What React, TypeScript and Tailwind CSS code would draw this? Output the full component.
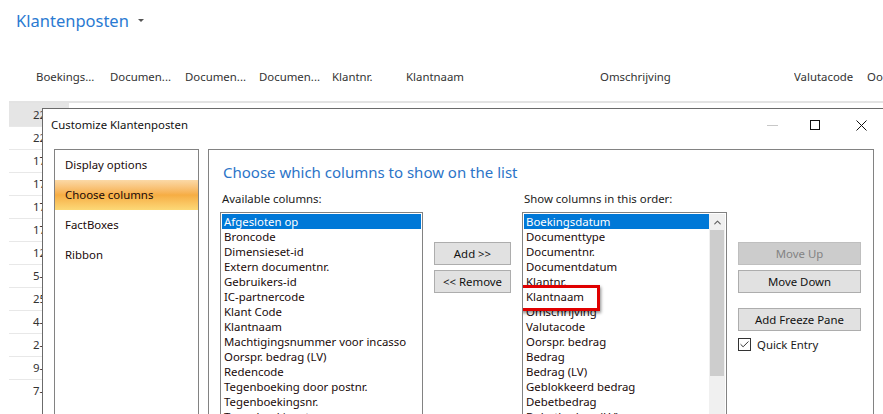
import { Check, ChevronUp } from 'lucide-react';

const font = { fontFamily: '"Noto Sans", "Open Sans", sans-serif' };

const headers: Array<{ label: string; width: string }> = [
  { label: 'Boekings...', width: 'w-[74px]' },
  { label: 'Documen...', width: 'w-[75px]' },
  { label: 'Documen...', width: 'w-[74px]' },
  { label: 'Documen...', width: 'w-[73px]' },
  { label: 'Klantnr.', width: 'w-[74px]' },
  { label: 'Klantnaam', width: 'w-[194px]' },
  { label: 'Omschrijving', width: 'w-[194px]' },
  { label: 'Valutacode', width: 'w-[73px]' },
  { label: 'Oorspr. bedrag', width: 'w-[80px]' }
];

const gridDates = [
  '22-12-2018',
  '22-12-2018',
  '17-12-2018',
  '17-12-2018',
  '17-12-2018',
  '17-12-2018',
  '12-12-2018',
  '5-12-2018',
  '25-11-2018',
  '4-11-2018',
  '2-11-2018',
  '9-10-2018',
  '7-10-2018'
];

const navItems = ['Display options', 'Choose columns', 'FactBoxes', 'Ribbon'];

const available = [
  'Afgesloten op',
  'Broncode',
  'Dimensieset-id',
  'Extern documentnr.',
  'Gebruikers-id',
  'IC-partnercode',
  'Klant Code',
  'Klantnaam',
  'Machtigingsnummer voor incasso',
  'Oorspr. bedrag (LV)',
  'Redencode',
  'Tegenboeking door postnr.',
  'Tegenboekingsnr.',
  'Tegenboekingstype'
];

const shown = [
  'Boekingsdatum',
  'Documenttype',
  'Documentnr.',
  'Documentdatum',
  'Klantnr.',
  'Klantnaam',
  'Omschrijving',
  'Valutacode',
  'Oorspr. bedrag',
  'Bedrag',
  'Bedrag (LV)',
  'Geblokkeerd bedrag',
  'Debetbedrag',
  'Debetbedrag (LV)'
];

function ListItem({ label, selected }: { label: string; selected: boolean }) {
  return (
    <div
      className={
        selected
          ? 'h-[15px] shrink-0 whitespace-nowrap bg-[#0078d7] pl-[2px] leading-[15px] text-white'
          : 'h-[15px] shrink-0 whitespace-nowrap pl-[2px] leading-[15px] text-[#1a0a0a]'
      }
    >
      {label}
    </div>
  );
}

function WinButton({ label, disabled }: { label: string; disabled?: boolean }) {
  return (
    <div
      className={
        disabled
          ? 'flex h-[23px] items-center justify-center border border-[#bfbfbf] bg-[#cccccc] text-[#838383]'
          : 'flex h-[23px] items-center justify-center border border-[#adadad] bg-[#e1e1e1] text-[#111]'
      }
    >
      {label}
    </div>
  );
}

export default function App() {
  return (
    <div className="relative h-[414px] w-[883px] overflow-hidden bg-white text-[11.4px]" style={font}>
      {/* page header */}
      <div className="flex h-[44px] items-center pl-[16px] pb-[1px]">
        <span className="text-[16.5px] leading-none text-[#2a7ad2]">Klantenposten</span>
        <span className="ml-[9px] mt-[-3px] h-0 w-0 border-x-[3px] border-t-[3px] border-x-transparent border-t-[#555]" />
      </div>
      <div className="flex h-[57px] items-center whitespace-nowrap pl-[36px] pt-[9px] text-[#333]">
        {headers.map((h, i) => (
          <div key={i} className={`${h.width} shrink-0 overflow-hidden`}>
            {h.label}
          </div>
        ))}
      </div>
      <div className="ml-[9px] h-[2px] bg-[#e3e3e3]" />
      <div className="ml-[9px] w-[60px]">
        {gridDates.map((d, i) => (
          <div
            key={i}
            className={
              i === 0
                ? 'flex h-[23px] items-center overflow-hidden whitespace-nowrap bg-[#e5e5e5] pl-[24px] text-[#333]'
                : 'flex h-[23px] items-center overflow-hidden whitespace-nowrap border-t border-[#e8e8e8] pl-[24px] text-[#333]'
            }
          >
            {d}
          </div>
        ))}
      </div>

      {/* dialog window */}
      <div className="absolute left-[42px] top-[108px] flex h-[320px] w-[860px] flex-col border border-[#6b6b6b] bg-white">
        <div className="flex h-[40px] shrink-0 items-center pb-[8px] pl-[8px] text-[#111]">
          <span>Customize Klantenposten</span>
          <div className="ml-auto flex items-center pr-[34px]">
            <span className="mr-[32px] h-px w-[11px] bg-[#c8c8c8]" />
            <span className="mr-[36px] h-[10px] w-[10px] border border-[#111]" />
            <svg width="11" height="11" viewBox="0 0 11 11" className="text-[#111]">
              <path d="M0.5 0.5 L10.5 10.5 M10.5 0.5 L0.5 10.5" stroke="currentColor" strokeWidth="1" />
            </svg>
          </div>
        </div>
        <div className="flex min-h-0 flex-1 pl-[11px]">
          {/* navigation */}
          <div className="w-[145px] shrink-0 border border-[#828282]">
            {navItems.map((n) => (
              <div
                key={n}
                className={
                  n === 'Choose columns'
                    ? 'flex h-[30px] items-center bg-gradient-to-b from-[#fbd9a6] via-[#f6ad43] to-[#fcd977] pl-[10px] text-[#1a0a0a]'
                    : 'flex h-[30px] items-center pl-[10px] text-[#1a0a0a]'
                }
              >
                {n}
              </div>
            ))}
          </div>
          {/* main panel */}
          <div className="ml-[9px] w-[666px] shrink-0 border border-[#828282] pl-[11px]">
            <div className="ml-[3px] mt-[11px] text-[15px] leading-[22px] text-[#2b74c8]">
              Choose which columns to show on the list
            </div>
            <div className="mt-[7px] flex">
              <div className="w-[203px] shrink-0">
                <div className="ml-[2px] leading-[17px] text-[#1a1a1a]">Available columns:</div>
                <div className="mt-[5px] flex h-[220px] flex-col overflow-hidden border border-[#828282] p-px">
                  {available.map((a, i) => (
                    <ListItem key={a} label={a} selected={i === 0} />
                  ))}
                </div>
              </div>
              <div className="ml-[11px] flex w-[77px] shrink-0 flex-col gap-[5px] pt-[52px]">
                <WinButton label="Add >>" />
                <WinButton label="<< Remove" />
              </div>
              <div className="ml-[11px] w-[205px] shrink-0">
                <div className="ml-[2px] leading-[17px] text-[#1a1a1a]">Show columns in this order:</div>
                <div className="relative mt-[5px] flex h-[220px] overflow-hidden border border-[#828282] p-px">
                  <div className="flex min-w-0 flex-1 flex-col">
                    {shown.map((s, i) => (
                      <ListItem key={s} label={s} selected={i === 0} />
                    ))}
                  </div>
                  <div className="flex w-[16px] shrink-0 flex-col bg-[#f0f0f0]">
                    <div className="flex h-[16px] items-center justify-center">
                      <ChevronUp size={11} strokeWidth={2.5} className="text-[#606060]" />
                    </div>
                    <div className="mx-px h-[146px] bg-[#cdcdcd]" />
                  </div>
                  {/* highlight around Klantnaam */}
                  <div className="absolute left-[-3px] top-[72px] h-[26px] w-[80px] border-[3px] border-[#e00000] shadow-[1px_2px_3px_rgba(0,0,0,0.45)]" />
                </div>
              </div>
              <div className="ml-[11px] flex w-[123px] shrink-0 flex-col pt-[52px]">
                <WinButton label="Move Up" disabled />
                <div className="mt-[5px]">
                  <WinButton label="Move Down" />
                </div>
                <div className="mt-[15px]">
                  <WinButton label="Add Freeze Pane" />
                </div>
                <div className="mt-[5px] flex items-center">
                  <span className="flex h-[13px] w-[13px] items-center justify-center border border-[#333] bg-white">
                    <Check size={11} strokeWidth={2} className="text-[#222]" />
                  </span>
                  <span className="ml-[6px] text-[#1a1a1a]">Quick Entry</span>
                </div>
              </div>
            </div>
          </div>
        </div>
      </div>
    </div>
  );
}
